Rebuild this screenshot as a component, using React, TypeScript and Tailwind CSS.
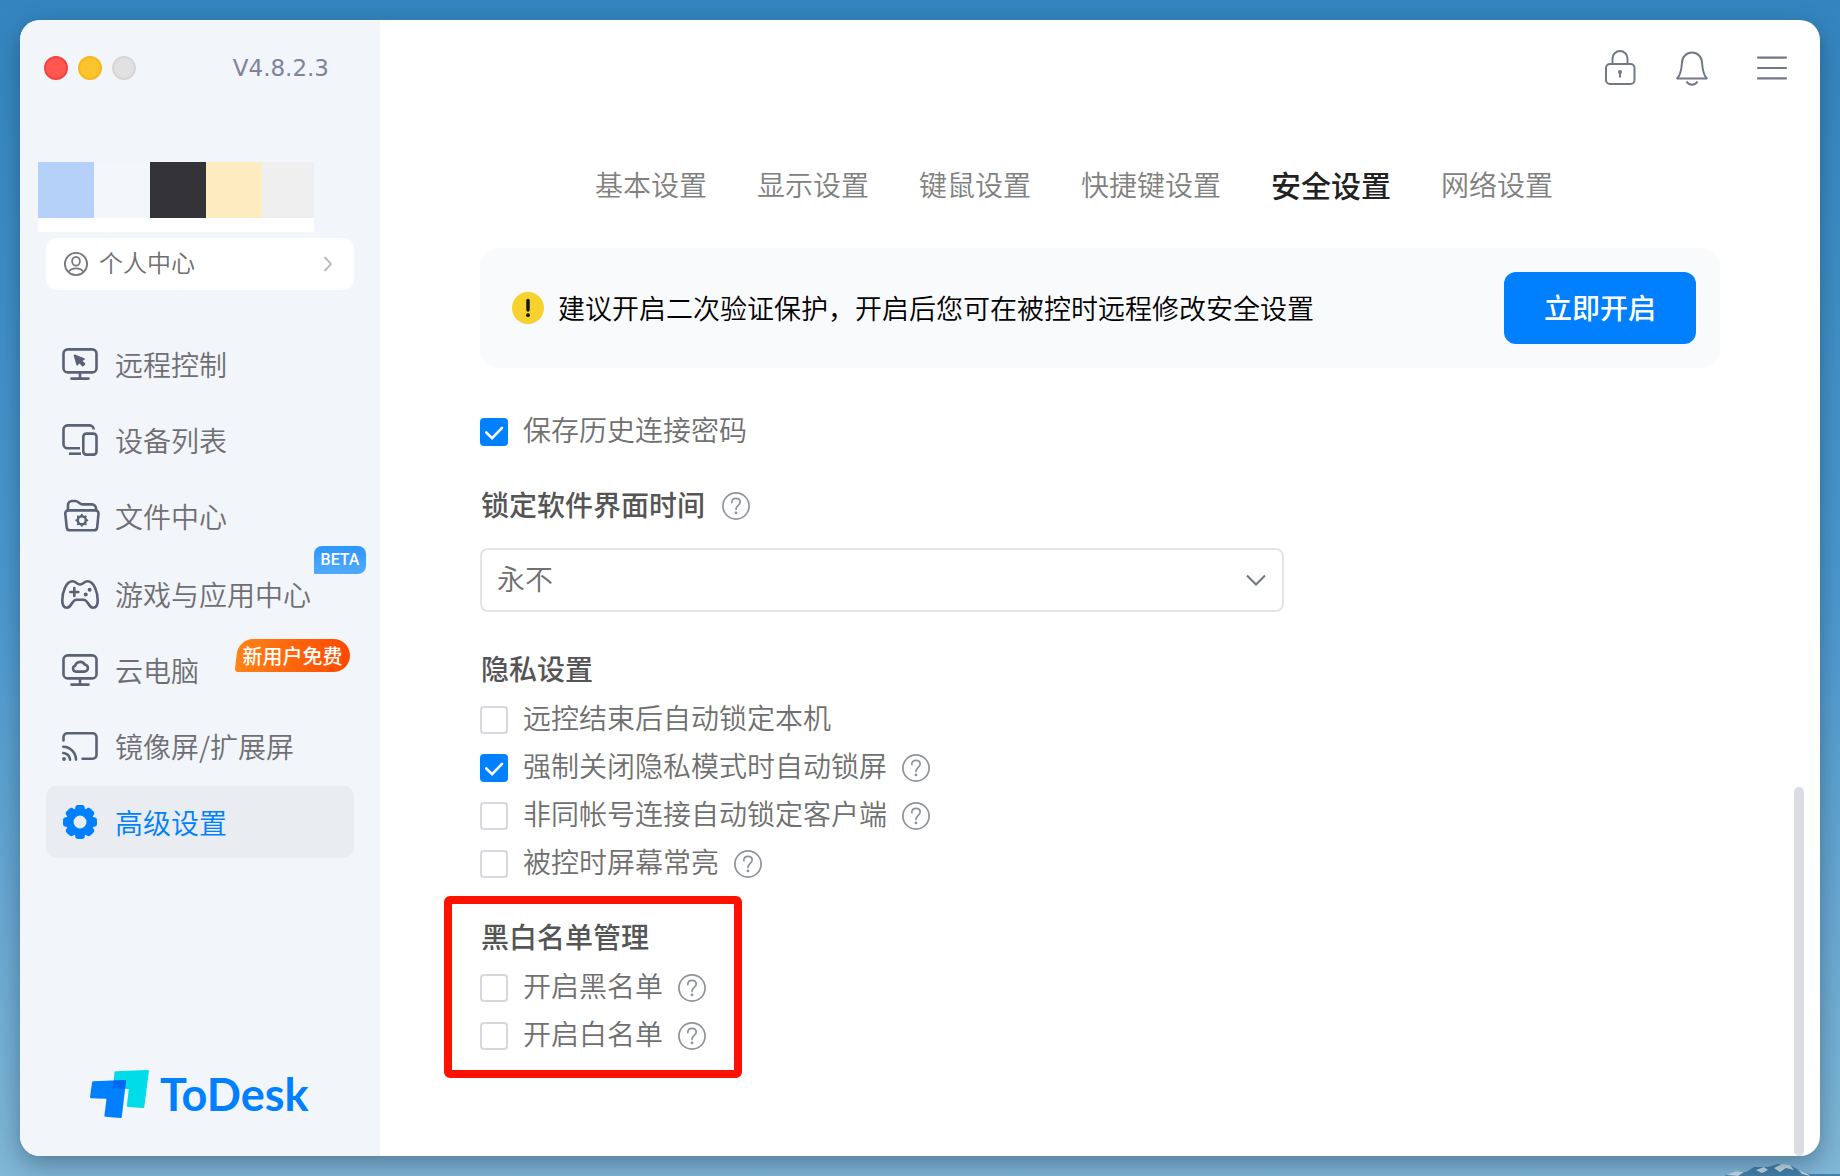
import { useId, useState, type ReactNode } from "react";

function IconFrame({ children, className = "text-[#5a6275]" }: { children: ReactNode; className?: string }) {
  return (
    <svg
      viewBox="0 0 36 36"
      className={`size-9 shrink-0 overflow-visible ${className}`}
      fill="none"
      stroke="currentColor"
      strokeWidth="2.6"
      strokeLinecap="round"
      strokeLinejoin="round"
      aria-hidden="true"
    >
      {children}
    </svg>
  );
}

function RemoteIcon() {
  return (
    <IconFrame>
      <rect x="1.5" y="3.4" width="33" height="23" rx="4.2" />
      <path d="M18 26.5v6M9.5 32.6h17" />
      <path d="M12.600 9.400l2.600 9.200 2.200-2.400 3.400 3.400 1.600-1.600-3.400-3.300 3-1.700z" fill="currentColor" strokeWidth="1.800" />
    </IconFrame>
  );
}

function DevicesIcon() {
  return (
    <IconFrame>
      <path d="M31.700 7.600v-.2a4 4 0 0 0-4-4H5.500a4 4 0 0 0-4 4v14.800a4 4 0 0 0 4 4H18" strokeLinecap="butt" />
      <path d="M7 31.700h12" strokeLinecap="butt" />
      <rect x="21.300" y="11.600" width="13.200" height="21" rx="3" />
    </IconFrame>
  );
}

function FolderIcon() {
  return (
    <IconFrame>
      <path d="M6 12V7a4 4 0 0 1 4-4h3.200c3.200 0 4.300 3.400 7.300 3.400h9.500a4 4 0 0 1 4 4V12" />
      <path d="M6.300 12.400h27.200a3 3 0 0 1 3 3.300l-1.300 13.600a3.300 3.300 0 0 1-3.300 3H8a3.300 3.300 0 0 1-3.300-3L3.300 15.700a3 3 0 0 1 3-3.300z" />
      <circle cx="19.800" cy="22.300" r="4" strokeWidth="2.400" />
      {[0, 45, 90, 135, 180, 225, 270, 315].map((a) => (
        <path key={a} d="M19.800 17.800v-.9" strokeWidth="2.200" transform={`rotate(${a} 19.8 22.3)`} />
      ))}
    </IconFrame>
  );
}

function GamepadIcon() {
  return (
    <IconFrame>
      <path d="M10.500 5.300c3.700 0 4.200 3.200 7.500 3.200s3.800-3.200 7.500-3.200c6.500 0 10.200 10.700 10.200 19.200 0 4.500-1.500 7.200-4.700 7.200-4.800 0-4.500-8-9.500-8h-7c-5 0-4.700 8-9.500 8-3.200 0-4.700-2.700-4.700-7.200C.3 16 4 5.300 10.500 5.300z" />
      <path d="M12.300 12v8M8.300 16h8" />
      <circle cx="23.700" cy="18.600" r="2" fill="currentColor" stroke="none" />
      <circle cx="27.600" cy="13.800" r="2" fill="currentColor" stroke="none" />
    </IconFrame>
  );
}

function CloudPcIcon() {
  return (
    <IconFrame>
      <rect x="1.500" y="3.400" width="33" height="23" rx="4.200" />
      <path d="M18 26.500v6M9.500 32.600h17" />
      <path d="M14 19.600a3 3 0 0 1-1-5.800 5.300 5.300 0 0 1 9.700-1.300 3.600 3.600 0 0 1 .3 7.100z" />
    </IconFrame>
  );
}

function CastIcon() {
  return (
    <IconFrame>
      <path d="M1.500 12.500V9a3.800 3.800 0 0 1 3.800-3.800h25.400A3.800 3.800 0 0 1 34.500 9v18a3.800 3.800 0 0 1-3.800 3.800H20.500" />
      <path d="M1.300 18.800A13 13 0 0 1 14 31.600M1.300 25a7 7 0 0 1 6.800 6.600" />
      <circle cx="2" cy="31" r="1.900" fill="currentColor" stroke="none" />
    </IconFrame>
  );
}

function GearIcon() {
  return (
    <IconFrame className="text-[#0080ff]">
      <path
        fillRule="evenodd"
        fill="currentColor"
        stroke="none"
        d="M18 4a14 14 0 1 0 0 28 14 14 0 0 0 0-28zM18 11.500a6.500 6.500 0 1 1 0 13 6.500 6.500 0 0 1 0-13z"
      />
      {[0, 45, 90, 135, 180, 225, 270, 315].map((a) => (
        <rect
          key={a}
          x="13.200"
          y="1"
          width="9.600"
          height="9"
          rx="3"
          fill="currentColor"
          stroke="none"
          transform={`rotate(${a} 18 18)`}
        />
      ))}
    </IconFrame>
  );
}

const navGroups = [
  [
    { label: "远程控制", icon: <RemoteIcon /> },
    { label: "设备列表", icon: <DevicesIcon /> },
    { label: "文件中心", icon: <FolderIcon /> },
  ],
  [
    { label: "游戏与应用中心", icon: <GamepadIcon />, badge: "beta" },
    { label: "云电脑", icon: <CloudPcIcon />, badge: "free" },
    { label: "镜像屏/扩展屏", icon: <CastIcon /> },
    { label: "高级设置", icon: <GearIcon />, active: true },
  ],
] as { label: string; icon: ReactNode; badge?: string; active?: boolean }[][];

function Badge({ kind }: { kind?: string }) {
  if (kind === "beta") {
    return (
      <span className="absolute -top-3 -right-3 flex h-7 w-[52px] items-center justify-center rounded-lg rounded-bl-none bg-linear-to-b from-[#2d96ff] to-[#4fabff] font-['Roboto','Liberation_Sans',sans-serif] text-base font-medium text-white">
        BETA
      </span>
    );
  }
  if (kind === "free") {
    return (
      <span className="absolute top-[5px] right-1 flex h-[33px] w-[115px] items-center justify-center">
        <svg viewBox="0 0 115 33" className="absolute inset-0 size-full" aria-hidden="true">
          <defs>
            <linearGradient id="free-badge">
              <stop offset="0" stopColor="#ff8418" />
              <stop offset="1" stopColor="#ff4800" />
            </linearGradient>
          </defs>
          <path
            d="M18 0h80.500a16.500 16.500 0 0 1 0 33H3a3 3 0 0 1-3-3.300L1.700 15A17 17 0 0 1 18 0z"
            fill="url(#free-badge)"
          />
        </svg>
        <span className="relative text-xl leading-8 font-medium whitespace-nowrap text-white">新用户免费</span>
      </span>
    );
  }
  return null;
}

function Sidebar() {
  return (
    <aside className="flex w-[360px] shrink-0 flex-col bg-[#f2f5fa]">
      <div className="flex h-24 items-center justify-between pr-[51px] pl-6">
        <div className="flex gap-2.5">
          <button aria-label="关闭" className="size-6 rounded-full border-2 border-[#f2453f] bg-[#ff5650]" />
          <button aria-label="最小化" className="size-6 rounded-full border-2 border-[#f3b91c] bg-[#fbc42c]" />
          <button aria-label="缩放" className="size-6 rounded-full border-2 border-[#d6d6d6] bg-[#e1e1e1]" />
        </div>
        <span className="font-['DejaVu_Sans',sans-serif] text-[23px] leading-8 text-[#7d849c]">V4.8.2.3</span>
      </div>

      <div className="mt-[46px] ml-[18px] w-[276px] bg-white pb-3.5" aria-hidden="true">
        <div className="flex h-14">
          <div className="w-14 bg-[#b6d1f9]" />
          <div className="w-14 bg-[#f3f6fb]" />
          <div className="w-14 bg-[#343337]" />
          <div className="w-14 bg-[#feecc1]" />
          <div className="flex-1 bg-[#efefef]" />
        </div>
      </div>

      <button className="mx-[26px] mt-1.5 flex h-[52px] items-center rounded-[10px] bg-white pr-[22px] pl-[18px] text-[#6e6e73]">
        <svg viewBox="0 0 24 24" className="size-6" fill="none" stroke="#77777c" strokeWidth="1.800" aria-hidden="true">
          <circle cx="12" cy="12" r="11.100" />
          <ellipse cx="12" cy="9.300" rx="3.900" ry="4.400" />
          <path d="M4.600 19.800c1.500-2.400 4.200-3.500 7.400-3.500s5.900 1.100 7.400 3.500" />
        </svg>
        <span className="ml-[11px] flex-1 pb-1 text-left text-2xl font-[350]">个人中心</span>
        <svg viewBox="0 0 8 16" className="h-4 w-2" fill="none" stroke="#b5b5b9" strokeWidth="1.800" aria-hidden="true">
          <path d="M.6 1l6.400 7-6.400 7" />
        </svg>
      </button>

      <nav className="mx-[26px] mt-[38px] flex flex-col gap-1.5">
        {navGroups.map((group, i) => (
          <div key={i} className="flex flex-col gap-1">
            {group.map((item) => (
              <a
                key={item.label}
                href="#"
                aria-current={item.active ? "page" : undefined}
                className={
                  item.active
                    ? "relative flex h-[72px] items-center gap-[17px] rounded-[10px] bg-[#e9ecf1] px-4 text-[#0080ff]"
                    : "relative flex h-[72px] items-center gap-[17px] rounded-[10px] px-4 text-[#6f6f73]"
                }
              >
                {item.icon}
                <span className="text-[28px] leading-10 font-[350] whitespace-nowrap">{item.label}</span>
                <Badge kind={item.badge} />
              </a>
            ))}
          </div>
        ))}
      </nav>

      <div className="mt-auto flex items-center pb-[38px] pl-[70px]">
        <svg viewBox="0 0 60 48" className="h-12 w-[60px]" aria-hidden="true">
          <path d="M25.500 1.300L58 0q1 0 .9 1L54.300 37q-.2 1.200-1.300 1.100l-15-1.200q-1.200-.1-1.100-1.300L38.800 19 23 18.200 24.500 2.300q.1-1 1-1z" fill="#00dce8" />
          <path d="M3.200 11.300L35 9.900q1.100 0 1 1L31.800 46.900q-.2 1.200-1.300 1.100l-15-1.200q-1.200-.1-1.100-1.300L16.500 28.800 1 28.200q-1.100-.1-1-1.200L2.100 12.300q.1-1 1.100-1z" fill="#0080ff" />
          <path d="M23.700 10.400L35 9.900q1.100 0 1 1L35 18.800 23 18.200z" fill="#0068f0" />
        </svg>
        <span className="ml-2.5 font-['Lato',sans-serif] text-[45px] leading-[48px] font-bold text-[#0080ff]">ToDesk</span>
      </div>
    </aside>
  );
}

function HelpButton() {
  return (
    <button aria-label="帮助" className="size-7 shrink-0">
      <svg viewBox="0 0 28 28" className="size-7" fill="none" stroke="#8f939c" strokeWidth="1.700" strokeLinecap="round" aria-hidden="true">
        <circle cx="14" cy="14" r="13.100" />
        <path d="M9.800 10.600c0-2.600 1.800-4.300 4.200-4.300s4.200 1.600 4.200 3.800c0 3.300-4.200 3.500-4.200 7.200" />
        <circle cx="14" cy="20.900" r="1.400" fill="#8f939c" stroke="none" />
      </svg>
    </button>
  );
}

function CheckRow({ label, checked = false, help = false }: { label: string; checked?: boolean; help?: boolean }) {
  const id = useId();
  const [on, setOn] = useState(checked);
  return (
    <div className="flex h-12 items-center gap-[15px]">
      <span className="relative size-7 shrink-0">
        <input
          id={id}
          type="checkbox"
          checked={on}
          onChange={(e) => setOn(e.target.checked)}
          className="block size-7 appearance-none rounded border-2 border-[#d7d8dd] bg-white checked:border-[#0080ff] checked:bg-[#0080ff]"
        />
        {on && (
          <svg viewBox="0 0 28 28" className="pointer-events-none absolute inset-0 size-7" fill="none" stroke="white" strokeWidth="2.600" strokeLinecap="round" aria-hidden="true">
            <path d="M6.300 14.500l5.800 5.600 9.900-10.300" />
          </svg>
        )}
      </span>
      <label htmlFor={id} className="pb-1.5 text-[28px] leading-10 font-[350] whitespace-nowrap text-[#707070]">
        {label}
      </label>
      {help && <HelpButton />}
    </div>
  );
}

function SectionTitle({ children }: { children: ReactNode }) {
  return <h2 className="flex h-12 items-center pb-1 pl-px text-[28px] font-medium text-[#555555]">{children}</h2>;
}

const tabs = ["基本设置", "显示设置", "键鼠设置", "快捷键设置", "安全设置", "网络设置"];

export default function App() {
  return (
    <div className="relative flex min-h-screen overflow-hidden bg-linear-to-b from-[#3485bf] via-[#4b98ce] to-[#80b6d6] p-5 font-['Noto_Sans_CJK_SC',sans-serif]">
      <svg viewBox="0 0 116 14" className="absolute right-0 bottom-0 h-3.5 w-[116px]" aria-hidden="true">
        <path d="M0 14l12-5 10 1 8-5 14 0 10-3 12 1 10 6 10 3 30 0v2z" fill="#447fa8" />
        <path d="M2 13l10-4 8 1-6 4zM32 8l8-3 4 3-6 3zM50 6l8-4 8 1 4 5-8-2-6 4zM74 8l10 4 2 2-8-2z" fill="#bfd7e4" />
      </svg>

      <div className="relative flex flex-1 overflow-hidden rounded-[20px] bg-white shadow-[0_8px_24px_rgba(0,20,40,0.35)]">
        <Sidebar />

        <main className="relative flex min-w-0 flex-1 flex-col">
          <header className="flex h-24 items-center justify-end gap-10 pr-8">
            <button aria-label="锁定">
              <svg viewBox="0 0 32 36" className="h-9 w-8" fill="none" stroke="#727888" strokeWidth="2" aria-hidden="true">
                <path d="M8.500 14V8.500a7.500 7.500 0 0 1 15 0V14" />
                <rect x="2" y="14" width="28.500" height="20" rx="4" />
                <circle cx="16" cy="22" r="2" fill="#727888" stroke="none" />
                <path d="M16 22v5.500" />
              </svg>
            </button>
            <button aria-label="通知">
              <svg viewBox="0 0 32 36" className="h-9 w-8" fill="none" stroke="#727888" strokeWidth="2" strokeLinejoin="round" aria-hidden="true">
                <path d="M1.200 28.500h29.600C27.500 25 26.500 20 26 12.500a10 10 0 0 0-20 0C5.500 20 4.500 25 1.200 28.500z" />
                <path d="M10.500 31.500c2.500 4.200 8.500 4.200 11 0" />
              </svg>
            </button>
            <button aria-label="菜单" className="ml-2">
              <svg viewBox="0 0 32 36" className="h-9 w-8" fill="none" stroke="#727888" strokeWidth="2.200" strokeLinecap="round" aria-hidden="true">
                <path d="M2 7.600h28M2 18h28M2 28.400h28" />
              </svg>
            </button>
          </header>

          <div className="mr-[100px] ml-[100px] flex flex-col">
            <div role="tablist" className="mt-[42px] flex h-[52px] items-center gap-[50px] pl-[115px]">
              {tabs.map((tab) => (
                <button
                  key={tab}
                  role="tab"
                  aria-selected={tab === "安全设置"}
                  className={
                    tab === "安全设置"
                      ? "shrink-0 text-[30px] leading-[52px] font-medium text-[#222222]"
                      : "shrink-0 text-[28px] leading-[52px] font-[350] text-[#808080]"
                  }
                >
                  {tab}
                </button>
              ))}
            </div>

            <section className="mt-[38px] flex h-[120px] items-center rounded-[20px] bg-[#f9fafc] pr-6 pl-8">
              <svg viewBox="0 0 32 32" className="size-8 shrink-0" aria-hidden="true">
                <circle cx="16" cy="16" r="16" fill="#f7d22f" />
                <path d="M16 8.500v9.500" stroke="#111111" strokeWidth="3.400" strokeLinecap="round" />
                <circle cx="16" cy="23.200" r="1.900" fill="#111111" />
              </svg>
              <p className="ml-3.5 flex-1 text-[27px] leading-10 font-[350] text-black">
                建议开启二次验证保护，开启后您可在被控时远程修改安全设置
              </p>
              <button className="h-[72px] w-48 shrink-0 rounded-xl bg-[#0080ff] pb-0.5 text-[28px] font-medium text-white">
                立即开启
              </button>
            </section>

            <div className="mt-10">
              <CheckRow label="保存历史连接密码" checked />
            </div>

            <section className="mt-[26px]">
              <div className="flex items-center gap-[17px]">
                <SectionTitle>锁定软件界面时间</SectionTitle>
                <HelpButton />
              </div>
              <div className="relative mt-[18px] w-[804px] max-w-full">
                <select
                  aria-label="锁定软件界面时间"
                  className="block h-16 w-full appearance-none rounded-lg border-2 border-[#e4e4e6] bg-white pr-14 pb-1 pl-[15px] text-[28px] font-[350] text-[#707070]"
                >
                  <option>永不</option>
                </select>
                <svg viewBox="0 0 20 12" className="pointer-events-none absolute top-[26px] right-[18px] h-3 w-5" fill="none" stroke="#707580" strokeWidth="2" aria-hidden="true">
                  <path d="M1 1.500l9 9 9-9" />
                </svg>
              </div>
            </section>

            <section className="mt-[34px]">
              <SectionTitle>隐私设置</SectionTitle>
              <div className="mt-0.5">
                <CheckRow label="远控结束后自动锁定本机" />
                <CheckRow label="强制关闭隐私模式时自动锁屏" checked help />
                <CheckRow label="非同帐号连接自动锁定客户端" help />
                <CheckRow label="被控时屏幕常亮" help />
              </div>
            </section>

            <section className="relative mt-[26px] w-fit">
              <SectionTitle>黑白名单管理</SectionTitle>
              <div className="mt-0.5">
                <CheckRow label="开启黑名单" help />
                <CheckRow label="开启白名单" help />
              </div>
              <div className="pointer-events-none absolute -inset-x-9 -inset-y-[18px] rounded-md border-8 border-[#ff1100]" />
            </section>
          </div>

          <div className="absolute right-4 bottom-0 h-[369px] w-2.5 rounded-full bg-[#dcdde2]" />
        </main>
      </div>
    </div>
  );
}
